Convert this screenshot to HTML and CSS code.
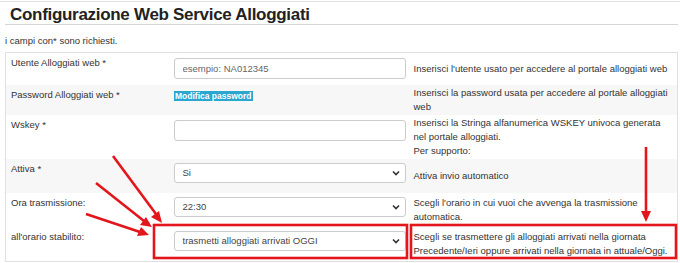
FILE: index.html
```html
<!DOCTYPE html>
<html lang="it">
<head>
    <meta charset="UTF-8">
    <title>Configurazione Web Service Alloggiati</title>
    <link rel="stylesheet" href="styles.css">
</head>
<body>
    <div class="page">
        <h1>Configurazione Web Service Alloggiati</h1>
        <p class="note">i campi con* sono richiesti.</p>

        <table class="cfg-table">
            <colgroup>
                <col class="col-label">
                <col class="col-field">
                <col>
            </colgroup>
            <tr>
                <td class="label">Utente Alloggiati web *</td>
                <td class="field"><input type="text" placeholder="esempio: NA012345"></td>
                <td class="desc">Inserisci l'utente usato per accedere al portale alloggiati web</td>
            </tr>
            <tr class="striped">
                <td class="label">Password Alloggiati web *</td>
                <td class="field field-btn"><span class="btn-pwd">Modifica password</span></td>
                <td class="desc">Inserisci la password usata per accedere al portale alloggiati<br>web</td>
            </tr>
            <tr>
                <td class="label">Wskey *</td>
                <td class="field"><input type="text"></td>
                <td class="desc">Inserisci la Stringa alfanumerica WSKEY univoca generata<br>nel portale alloggiati.<br>Per supporto:</td>
            </tr>
            <tr class="striped">
                <td class="label">Attiva *</td>
                <td class="field field-sel">
                    <div class="select">
                        <span>Si</span>
                        <svg width="8" height="6" viewBox="0 0 8 6"><path d="M1 1.5 L4 4.5 L7 1.5" fill="none" stroke="#333" stroke-width="1.6"/></svg>
                    </div>
                </td>
                <td class="desc">Attiva invio automatico</td>
            </tr>
            <tr>
                <td class="label">Ora trasmissione:</td>
                <td class="field field-sel">
                    <div class="select">
                        <span>22:30</span>
                        <svg width="8" height="6" viewBox="0 0 8 6"><path d="M1 1.5 L4 4.5 L7 1.5" fill="none" stroke="#333" stroke-width="1.6"/></svg>
                    </div>
                </td>
                <td class="desc">Scegli l'orario in cui vuoi che avvenga la trasmissione<br>automatica.</td>
            </tr>
            <tr>
                <td class="label">all'orario stabilito:</td>
                <td class="field field-sel">
                    <div class="select">
                        <span>trasmetti alloggiati arrivati OGGI</span>
                        <svg width="8" height="6" viewBox="0 0 8 6"><path d="M1 1.5 L4 4.5 L7 1.5" fill="none" stroke="#333" stroke-width="1.6"/></svg>
                    </div>
                </td>
                <td class="desc">Scegli se trasmettere gli alloggiati arrivati nella giornata<br>Precedente/Ieri oppure arrivati nella giornata in attuale/Oggi.</td>
            </tr>
        </table>
    </div>

    <!-- red annotations drawn on top of the screenshot -->
    <svg class="annotations" width="680" height="263" viewBox="0 0 680 263">
        <g stroke="#e3161b" stroke-width="2.6" fill="none">
            <rect x="154" y="225" width="253" height="33"/>
            <rect x="411" y="225" width="265" height="33"/>
            <line x1="113" y1="156" x2="156" y2="214"/>
            <line x1="96" y1="183" x2="144" y2="221"/>
            <line x1="86" y1="214" x2="140" y2="232"/>
            <line x1="646" y1="147" x2="646" y2="212"/>
        </g>
        <g fill="#e3161b">
            <polygon points="162,223 151,217 159,211"/>
            <polygon points="152,227 140,225 146,217"/>
            <polygon points="149,235 137,236 141,227"/>
            <polygon points="646,222 641,211 651,211"/>
        </g>
    </svg>
</body>
</html>
```

FILE: styles.css
```css
/* General styles */
body {
    margin: 0;
    font-family: "Liberation Sans", Arial, sans-serif;
    font-size: 9.5px;
    line-height: 14px;
    color: #333;
    background-color: #fff;
    border-top: 1px solid #e2e2e2;
    margin-top: 1px;
}

.page {
    margin: 0 2px 0 5px;
}

h1 {
    margin: 0;
    padding: 4px 0 0 5px;
    font-size: 17px;
    line-height: 18px;
    letter-spacing: -0.3px;
    font-weight: bold;
    color: #222;
    border-bottom: 1px solid #d6d6d6;
}

.note {
    margin: 9px 0 4px 0;
    padding-left: 0;
    color: #333;
}

/* Config table */
.cfg-table {
    width: 673px;
    border-collapse: collapse;
    table-layout: fixed;
    border: 1px solid #e0e0e0;
}

.col-label {
    width: 160px;
}

.col-field {
    width: 244px;
}

.cfg-table tr.striped {
    background-color: #f7f7f7;
}

.cfg-table td {
    padding: 3px 4px 3px 5px;
    vertical-align: top;
}

.cfg-table td.field {
    padding: 5px 4px 6px 8px;
}

.cfg-table td.field-btn {
    padding-top: 4px;
}

.cfg-table td.field-sel {
    padding: 4px 4px 10px 8px;
}

.cfg-table td.desc {
    padding: 1px 4px 1px 4px;
    vertical-align: middle;
}

.cfg-table input {
    display: block;
    box-sizing: border-box;
    width: 232px;
    height: 21px;
    margin: 0;
    padding: 0 8px;
    font-family: inherit;
    font-size: 9.5px;
    color: #555;
    border: 1px solid #ccc;
    border-radius: 3px;
    background-color: #fff;
}

.cfg-table input::placeholder {
    color: #666;
}

.btn-pwd {
    display: inline-block;
    padding: 0 1.5px;
    font-size: 8.5px;
    line-height: 10px;
    font-weight: bold;
    color: #fff;
    background-color: #2ba6cf;
}

.select {
    display: flex;
    align-items: center;
    justify-content: space-between;
    box-sizing: border-box;
    width: 232px;
    height: 20px;
    padding: 0 5px 0 8px;
    border: 1px solid #ccc;
    border-radius: 3px;
    background-color: #fff;
    color: #444;
}

/* Annotation overlay */
.annotations {
    position: absolute;
    left: 0;
    top: 0;
    pointer-events: none;
}
```
